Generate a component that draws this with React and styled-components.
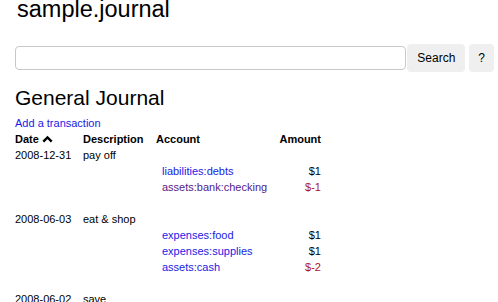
import React from "react";
import styled, { createGlobalStyle } from "styled-components";

const GlobalStyle = createGlobalStyle`
  body {
    margin: 0;
    background: #fff;
    font-family: "Liberation Sans", Arial, sans-serif;
    color: #000;
  }
`;

const Page = styled.div`
  padding: 0 4px 0 15px;
`;

const SiteTitle = styled.h1`
  margin: 0;
  font-size: 23.5px;
  font-weight: normal;
  line-height: 18px;
  padding-left: 2px;
`;

const SearchForm = styled.form`
  display: flex;
  align-items: center;
  margin-top: 26px;
  height: 28px;
`;

const SearchInput = styled.input`
  flex: 1;
  height: 24px;
  box-sizing: border-box;
  border: 1px solid #c8c8c8;
  border-radius: 4px;
  margin: 0 1px 0 0;
  padding: 0 6px;
  font: inherit;
`;

const FormButton = styled.button`
  height: 28px;
  box-sizing: border-box;
  border: none;
  border-radius: 4px;
  background: #efefef;
  padding: 0 ${(p) => (p.$narrow ? "9px" : "10px")};
  margin-left: ${(p) => (p.$narrow ? "4px" : "0")};
  font-family: "Liberation Sans", Arial, sans-serif;
  font-size: 12px;
  color: #000;
`;

const Heading = styled.h2`
  margin: 14px 0 0;
  font-size: 21px;
  font-weight: normal;
  line-height: 24px;
`;

const Link = styled.a`
  color: ${(p) => (p.$visited ? "#551a8b" : "#1a1ae6")};
  text-decoration: none;
`;

const AddLink = styled(Link)`
  display: block;
  margin-top: 5px;
  font-size: 11px;
  line-height: 16px;
`;

const Journal = styled.div`
  font-size: 11px;
  line-height: 16px;
`;

const Row = styled.div`
  display: grid;
  grid-template-columns: 68px 73px 123px 42px;
  height: 16px;
  font-weight: ${(p) => (p.$head ? "bold" : "normal")};
`;

const Cell = styled.div`
  white-space: nowrap;
  display: flex;
  align-items: center;
  gap: 3px;
`;

const AccountCell = styled(Cell)`
  padding-left: 6px;
`;

const AmountCell = styled(Cell)`
  justify-content: flex-end;
  color: ${(p) => (p.$negative ? "#a8141e" : "#000")};
`;

const SortIcon = () => (
  <svg width="11" height="8" viewBox="0 0 11 8">
    <path d="M1.3 6.6 L5.5 2.4 L9.7 6.6" fill="none" stroke="#000" strokeWidth="2.4" />
  </svg>
);

const transactions = [
  {
    date: "2008-12-31",
    description: "pay off",
    postings: [
      { account: "liabilities:debts", amount: "$1" },
      { account: "assets:bank:checking", amount: "$-1", visited: true },
    ],
  },
  {
    date: "2008-06-03",
    description: "eat & shop",
    postings: [
      { account: "expenses:food", amount: "$1" },
      { account: "expenses:supplies", amount: "$1" },
      { account: "assets:cash", amount: "$-2" },
    ],
  },
  {
    date: "2008-06-02",
    description: "save",
    postings: [
      { account: "assets:bank:saving", amount: "$1" },
      { account: "assets:bank:checking", amount: "$-1", visited: true },
    ],
  },
];

const App = () => {
  return (
    <Page>
      <GlobalStyle />
      <SiteTitle>sample.journal</SiteTitle>
      <SearchForm onSubmit={(e) => e.preventDefault()}>
        <SearchInput type="text" />
        <FormButton type="submit">Search</FormButton>
        <FormButton type="button" $narrow>?</FormButton>
      </SearchForm>
      <Heading>General Journal</Heading>
      <AddLink href="#">Add a transaction</AddLink>
      <Journal>
        <Row $head>
          <Cell>
            Date <SortIcon />
          </Cell>
          <Cell>Description</Cell>
          <Cell>Account</Cell>
          <AmountCell>Amount</AmountCell>
        </Row>
        {transactions.map((t) => (
          <React.Fragment key={t.date}>
            <Row>
              <Cell>{t.date}</Cell>
              <Cell>{t.description}</Cell>
              <Cell />
              <Cell />
            </Row>
            {t.postings.map((p) => (
              <Row key={p.account}>
                <Cell />
                <Cell />
                <AccountCell>
                  <Link href="#" $visited={p.visited}>{p.account}</Link>
                </AccountCell>
                <AmountCell $negative={p.amount.startsWith("$-")}>{p.amount}</AmountCell>
              </Row>
            ))}
            <Row />
          </React.Fragment>
        ))}
      </Journal>
    </Page>
  );
};

export default App;
